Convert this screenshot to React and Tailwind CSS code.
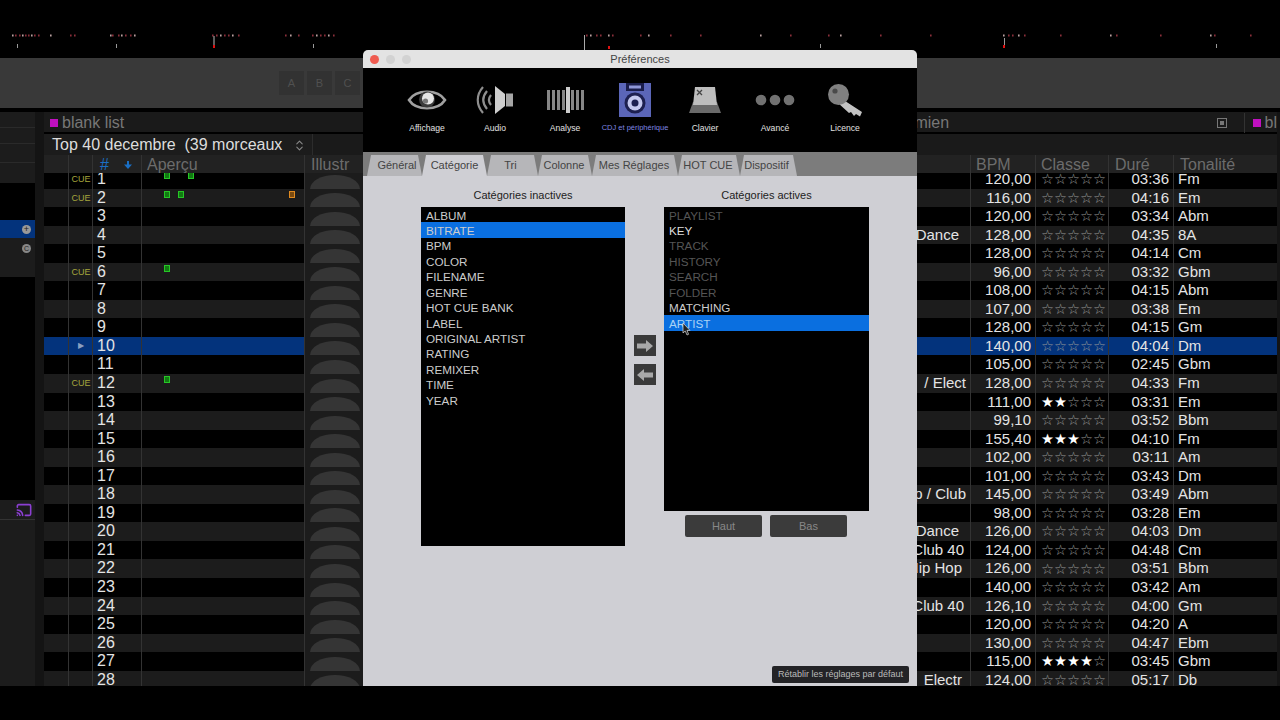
import { Cast, ChevronsUpDown } from "lucide-react";

const cols = "grid grid-cols-[24px_24px_49px_163px_59px_607px_65px_73px_65px_104px]";

// n, cue, genre + its padding, bpm, rating, time, key
const tracks = [
  [1, true, "", "", "120,00", 0, "03:36", "Fm"],
  [2, true, "", "", "116,00", 0, "04:16", "Em"],
  [3, false, "", "", "120,00", 0, "03:34", "Abm"],
  [4, false, "Dance", "pr-[11px]", "128,00", 0, "04:35", "8A"],
  [5, false, "", "", "128,00", 0, "04:14", "Cm"],
  [6, true, "", "", "96,00", 0, "03:32", "Gbm"],
  [7, false, "", "", "108,00", 0, "04:15", "Abm"],
  [8, false, "", "", "107,00", 0, "03:38", "Em"],
  [9, false, "", "", "128,00", 0, "04:15", "Gm"],
  [10, false, "", "", "140,00", 0, "04:04", "Dm"],
  [11, false, "", "", "105,00", 0, "02:45", "Gbm"],
  [12, true, "/ Elect", "pr-[4px]", "128,00", 0, "04:33", "Fm"],
  [13, false, "", "", "111,00", 2, "03:31", "Em"],
  [14, false, "", "", "99,10", 0, "03:52", "Bbm"],
  [15, false, "", "", "155,40", 3, "04:10", "Fm"],
  [16, false, "", "", "102,00", 0, "03:11", "Am"],
  [17, false, "", "", "101,00", 0, "03:43", "Dm"],
  [18, false, "p / Club", "pr-[4px]", "145,00", 0, "03:49", "Abm"],
  [19, false, "", "", "98,00", 0, "03:28", "Em"],
  [20, false, "Dance", "pr-[11px]", "126,00", 0, "04:03", "Dm"],
  [21, false, "Club 40", "pr-[6px]", "124,00", 0, "04:48", "Cm"],
  [22, false, "Hip Hop", "pr-[8px]", "126,00", 0, "03:51", "Bbm"],
  [23, false, "", "", "140,00", 0, "03:42", "Am"],
  [24, false, "Club 40", "pr-[6px]", "126,10", 0, "04:00", "Gm"],
  [25, false, "", "", "120,00", 0, "04:20", "A"],
  [26, false, "", "", "130,00", 0, "04:47", "Ebm"],
  [27, false, "", "", "115,00", 4, "03:45", "Gbm"],
  [28, false, "Electr", "pr-[8px]", "124,00", 0, "05:17", "Db"],
];

const marks = {
  1: ["left-[22px]", "left-[46px]"],
  2: ["left-[22px]", "left-[36px]"],
  6: ["left-[22px]"],
  12: ["left-[22px]"],
};

const inactive = ["ALBUM", "BITRATE", "BPM", "COLOR", "FILENAME", "GENRE", "HOT CUE BANK", "LABEL", "ORIGINAL ARTIST", "RATING", "REMIXER", "TIME", "YEAR"];

const active = [
  ["PLAYLIST", "text-[#555]"],
  ["KEY", "text-[#ddd]"],
  ["TRACK", "text-[#555]"],
  ["HISTORY", "text-[#555]"],
  ["SEARCH", "text-[#555]"],
  ["FOLDER", "text-[#555]"],
  ["MATCHING", "text-[#ccc]"],
  ["ARTIST", "text-[#a9d2f5]"],
];

const tabs = [
  ["Général", "w-[55px] pl-[5px]"],
  ["Catégorie", "w-[65px]"],
  ["Tri", "w-[51px] pr-[4px]"],
  ["Colonne", "w-[54px] pr-[2px]"],
  ["Mes Réglages", "w-[86px] pr-[2px]"],
  ["HOT CUE", "w-[62px] pr-[2px]"],
  ["Dispositif", "w-[57px] pr-[4px]"],
];

function Waveform() {
  const dots = [12, 15, 19, 22, 25, 28, 31, 34, 38, 50, 70, 74, 110, 112, 118, 121, 125, 130, 134, 212, 216, 220, 224, 228, 232, 238, 285, 290, 298, 312, 316, 320, 324, 328, 333, 586, 590, 596, 600, 608, 612, 640, 648, 670, 700, 760, 790, 828, 840, 880, 930, 1003, 1008, 1012, 1018, 1024, 1060, 1110, 1116, 1160, 1210, 1214, 1250];
  return (
    <svg width="1280" height="58" className="block">
      {dots.map((x, i) => (
        <rect key={x} x={x} y="34.5" width="1.6" height="2" fill={i % 3 === 0 ? "#b9a0a0" : "#8a2f3a"} />
      ))}
      {[17, 116, 313, 820, 1216].map((x) => (
        <rect key={x} x={x} y="44" width="1" height="4" fill="#999" />
      ))}
      <rect x="584" y="35" width="1" height="15" fill="#aaa" />
      <rect x="213.5" y="36" width="1" height="10" fill="#bbb" />
      <rect x="213" y="45" width="2" height="3" fill="#d11" />
      <rect x="608" y="46" width="2" height="3" fill="#d11" />
      <rect x="1004" y="38" width="1" height="8" fill="#999" />
      <rect x="1003" y="45" width="2" height="3" fill="#d11" />
    </svg>
  );
}

function Stars({ n }) {
  return (
    <span className="font-['DejaVu_Sans',sans-serif] text-[14.5px] leading-none whitespace-nowrap">
      <span className="text-white">{"★".repeat(n)}</span>
      <span className="text-[#999]">{"☆".repeat(5 - n)}</span>
    </span>
  );
}

function Row({ t }) {
  const [n, cue, genre, pad, bpm, rating, time, key] = t;
  const selected = n === 10;
  const bg = selected ? "bg-[#03337c]" : n % 2 === 0 ? "bg-[#1c1c1c]" : "bg-black";
  return (
    <div className={`${cols} ${bg} h-[18.55px] items-stretch text-[15px] leading-[18.55px] text-[#e4e4e4]`}>
      <div />
      <div className="flex items-center justify-center border-l border-[#333] pl-[1px] text-[9px] text-[#a5a53c]">
        {cue && "CUE"}
        {selected && <span className="text-[8px] text-[#8aa0c0]">▶</span>}
      </div>
      <div className="border-l border-[#333] pl-[4px] text-[16px]">{n}</div>
      <div className="relative border-l border-[#333]">
        {(marks[n] || []).map((left) => (
          <span key={left} className={`absolute top-[2px] h-[7px] w-[6px] border border-[#26c626] bg-[#127a12] ${left}`} />
        ))}
        {n === 2 && <span className="absolute left-[147px] top-[2px] h-[7px] w-[6px] border border-[#e08a20] bg-[#7a4a10]" />}
      </div>
      <div className="flex items-end justify-center border-l border-[#333] bg-[#1c1c1c] pl-[2px]">
        <div className="h-[14px] w-[50px] rounded-[50%_50%_0_0/100%_100%_0_0] bg-[#353535]" />
      </div>
      <div className={`overflow-hidden text-right whitespace-nowrap ${pad}`}>{genre}</div>
      <div className="border-l border-[#333] pr-[4px] text-right">{bpm}</div>
      <div className="flex items-center border-l border-[#333] pl-[5px]">
        <Stars n={rating} />
      </div>
      <div className="border-l border-[#333] pr-[4px] text-right">{time}</div>
      <div className="border-l border-[#333] pl-[4px]">{key}</div>
    </div>
  );
}

function EyeIcon() {
  return (
    <svg width="40" height="24" viewBox="0 0 40 24">
      <path d="M2 12 C9 1 31 1 38 12 C31 23 9 23 2 12 Z" fill="none" stroke="#a0a0a0" strokeWidth="2.6" />
      <circle cx="20" cy="11.5" r="8" fill="#3a3a3a" />
      <circle cx="21" cy="10.5" r="6" fill="#e6e6e6" />
      <circle cx="18.5" cy="13" r="2.6" fill="#777" />
    </svg>
  );
}

function SpeakerIcon() {
  return (
    <svg width="38" height="28" viewBox="0 0 38 28">
      <path d="M7 1 C0 9 0 19 7 27" fill="none" stroke="#8e8e8e" strokeWidth="2.2" />
      <path d="M11 5 C6 11 6 17 11 23" fill="none" stroke="#8e8e8e" strokeWidth="2.2" />
      <path d="M15 9 C12.5 12 12.5 16 15 19" fill="none" stroke="#8e8e8e" strokeWidth="2.2" />
      <path d="M19 0 L29 8 L29 20 L19 28 Z" fill="#cfcfcf" />
      <rect x="30" y="7.5" width="7" height="13" fill="#a6a6a6" />
    </svg>
  );
}

function BarsIcon() {
  const xs = [0, 5, 10, 15, 24, 29, 34];
  return (
    <svg width="37" height="26" viewBox="0 0 37 26">
      {xs.map((x) => (
        <rect key={x} x={x} y="3" width="3" height="20" fill="#868686" />
      ))}
      <rect x="19" y="0" width="4" height="26" fill="#cdcdcd" />
    </svg>
  );
}

function FloppyIcon() {
  return (
    <svg width="32" height="34" viewBox="0 0 32 34">
      <path d="M0 0 H32 V34 H0 Z" fill="#5b66b8" />
      <rect x="7" y="0" width="18" height="8" fill="#1a1d4a" />
      <rect x="10" y="2.5" width="12" height="3" fill="#8f97d8" />
      <circle cx="16" cy="20" r="10.5" fill="#1d2050" />
      <circle cx="16" cy="20" r="7.5" fill="#c4c8ee" />
      <circle cx="16" cy="20" r="3.5" fill="#1d2050" />
    </svg>
  );
}

function KeyCapIcon() {
  return (
    <svg width="32" height="26" viewBox="0 0 32 26">
      <path d="M0 26 L4 15 H28 L32 26 Z" fill="#6a6a6a" />
      <path d="M6 0 H26 L28 18 H4 Z" fill="#bdbdbd" />
      <path d="M8 3 L13 8 M13 3 L8 8" stroke="#444" strokeWidth="1.3" />
    </svg>
  );
}

function DotsIcon() {
  return (
    <svg width="40" height="12" viewBox="0 0 40 12">
      <circle cx="6" cy="6" r="5.3" fill="#717171" />
      <circle cx="20" cy="6" r="5.3" fill="#717171" />
      <circle cx="34" cy="6" r="5.3" fill="#717171" />
    </svg>
  );
}

function KeyIcon() {
  return (
    <svg width="35" height="33" viewBox="0 0 35 33">
      <path d="M14 15 L34 28 L32 32.5 L28 30 L26 32 L23 28 L21 29 L10 19 Z" fill="#c2c2c2" />
      <circle cx="10.5" cy="10.5" r="10.5" fill="#808080" />
      <circle cx="7" cy="7" r="2.6" fill="#4a4a4a" />
    </svg>
  );
}

const prefs = [
  [<EyeIcon />, "Affichage"],
  [<SpeakerIcon />, "Audio"],
  [<BarsIcon />, "Analyse"],
  [<FloppyIcon />, "CDJ et périphérique"],
  [<KeyCapIcon />, "Clavier"],
  [<DotsIcon />, "Avancé"],
  [<KeyIcon />, "Licence"],
];

function Preferences() {
  return (
    <div className="absolute left-[363px] top-[50px] flex h-[636px] w-[554px] flex-col overflow-hidden rounded-t-[5px]">
      <div className="relative flex h-[18px] items-center justify-center bg-[#e3e3e3] text-[11px] text-[#444]">
        <div className="absolute left-[7px] flex gap-[7px]">
          <span className="h-[9px] w-[9px] rounded-full bg-[#ef5b50]" />
          <span className="h-[9px] w-[9px] rounded-full bg-[#d2d2d2]" />
          <span className="h-[9px] w-[9px] rounded-full bg-[#d2d2d2]" />
        </div>
        Préférences
      </div>

      <div className="flex h-[84px] bg-black pl-[27px]">
        {prefs.map(([icon, label], i) => (
          <div key={label} className={`flex w-[70px] flex-col items-center ${i === 0 ? "pl-[4px]" : ""}`}>
            <div className="mt-[14px] flex h-[36px] items-center justify-center">{icon}</div>
            <div className={`mt-[4px] whitespace-nowrap ${i === 3 ? "text-[7.5px] leading-[12px] text-[#7f86e0]" : "text-[8.6px] leading-[12px] text-[#e2e2e2]"}`}>{label}</div>
          </div>
        ))}
      </div>

      <div className="flex h-[24px] items-end bg-[#7c7c7c] pl-[4px]">
        {tabs.map(([label, w], i) => (
          <div
            key={label}
            className={`flex h-[21px] items-center justify-center text-[11px] text-[#444] [clip-path:polygon(4px_0,calc(100%-4px)_0,100%_100%,0_100%)] ${w} ${i === 1 ? "bg-[#cfcfd4]" : "bg-[#b6b6b9]"}`}
          >
            {label}
          </div>
        ))}
      </div>

      <div className="flex flex-1 flex-col justify-between bg-[#cfcfd4]">
        <div className="flex pl-[58px]">
          <div className="w-[204px]">
            <div className="h-[31px] pt-[13px] text-center text-[11px] leading-[13px] text-[#222]">Catégories inactives</div>
            <div className="h-[339px] bg-black">
              {inactive.map((name) => (
                <div key={name} className={`h-[15.45px] pl-[5px] pt-[0.5px] text-[11.7px] leading-[15px] text-[#ccc] ${name === "BITRATE" ? "bg-[#0a6fe0]" : ""}`}>
                  {name}
                </div>
              ))}
            </div>
          </div>

          <div className="w-[39px] pl-[9px] pt-[159px]">
            <button className="flex h-[21px] w-[22px] items-center justify-center bg-[#3a3a3a]">
              <svg width="16" height="12" viewBox="0 0 16 12"><path d="M0 3.5 H9 V0 L16 6 L9 12 V8.5 H0 Z" fill="#a8a8a8" /></svg>
            </button>
            <button className="mt-[8px] flex h-[21px] w-[22px] items-center justify-center bg-[#3a3a3a]">
              <svg width="16" height="12" viewBox="0 0 16 12"><path d="M16 3.5 H7 V0 L0 6 L7 12 V8.5 H16 Z" fill="#a8a8a8" /></svg>
            </button>
          </div>

          <div className="w-[205px]">
            <div className="h-[31px] pt-[13px] text-center text-[11px] leading-[13px] text-[#222]">Catégories actives</div>
            <div className="relative h-[304px] bg-black">
              {active.map(([name, color]) => (
                <div key={name} className={`h-[15.45px] pl-[5px] pt-[0.5px] text-[11.7px] leading-[15px] ${color} ${name === "ARTIST" ? "bg-[#0a6fe0]" : ""}`}>
                  {name}
                </div>
              ))}
              <svg className="absolute left-[18px] top-[116px]" width="9" height="13" viewBox="0 0 9 13">
                <path d="M1 0 V10 L3.2 8 L5 12 L6.6 11.3 L5 7.4 H8 Z" fill="#222" stroke="#ddd" strokeWidth="0.7" />
              </svg>
            </div>
            <div className="mt-[4px] flex gap-[8px] pl-[21px]">
              <button className="h-[22px] w-[77px] rounded-[2px] bg-[#3b3b3b] text-[11px] text-[#888]">Haut</button>
              <button className="h-[22px] w-[77px] rounded-[2px] bg-[#3b3b3b] text-[11px] text-[#888]">Bas</button>
            </div>
          </div>
        </div>

        <button className="mb-[3px] mr-[8px] h-[17px] w-[137px] self-end whitespace-nowrap rounded-[2px] bg-[#232326] text-[9px] text-[#bbb]">
          Rétablir les réglages par défaut
        </button>
      </div>
    </div>
  );
}

function Sidebar() {
  return (
    <div className="flex w-[35px] flex-col bg-[#1c1c1c]">
      <div className="h-[16px] border-b border-[#2a2a2a]" />
      <div className="h-[16px] border-b border-[#2a2a2a]" />
      <div className="h-[19px] border-b border-[#2a2a2a]" />
      <div className="h-[20px]" />
      <div className="h-[37px] bg-black" />
      <div className="flex h-[18px] items-center justify-end bg-[#03337c] pr-[4px]">
        <span className="flex h-[9px] w-[9px] items-center justify-center rounded-full bg-[#999] text-[9px] leading-none text-[#222]">+</span>
      </div>
      <div className="flex h-[20px] items-center justify-end pr-[4px]">
        <span className="flex h-[9px] w-[9px] items-center justify-center rounded-full bg-[#888] text-[7px] leading-none text-[#222]">C</span>
      </div>
      <div className="h-[19px]" />
      <div className="h-[223px] bg-black" />
      <div className="flex h-[20px] items-center justify-end border-b border-[#333] pr-[3px]">
        <Cast size={16} color="#8b3fd1" strokeWidth={2.4} />
      </div>
      <div className="flex-1" />
    </div>
  );
}

export default function App() {
  return (
    <div className="relative h-[720px] w-[1280px] overflow-hidden bg-black font-['Liberation_Sans',Arial,sans-serif]">
      <Waveform />

      <div className="flex h-[50px] items-center gap-[3px] bg-[#393939] pl-[279px]">
        {["A", "B", "C"].map((l) => (
          <div key={l} className="flex h-[24px] w-[25px] items-center justify-center bg-[#323232] text-[11px] text-[#505050]">{l}</div>
        ))}
      </div>

      <div className="mt-[4px] flex h-[574px]">
        <Sidebar />
        <div className="w-[9px] bg-[#141414]" />

        <div className="flex w-[1233px] flex-col">
          <div className="flex h-[20px] items-center bg-[#1a1a1a] pt-[1px] text-[16px] text-[#777]">
            <div className="flex w-[873px] items-center pl-[6px]">
              <span className="mr-[4px] h-[8px] w-[8px] bg-[#c010c0]" />
              blank list
            </div>
            <div className="w-[303px]">mien</div>
            <span className="flex h-[10px] w-[10px] items-center justify-center border border-[#777]">
              <span className="h-[4px] w-[4px] bg-[#777]" />
            </span>
            <span className="ml-[17px] h-[20px] border-l border-[#333]" />
            <span className="ml-[8px] mr-[4px] h-[8px] w-[8px] shrink-0 bg-[#c010c0]" />
            bl
          </div>

          <div className="mt-[2px] flex h-[21px] items-center bg-[#1a1a1a]">
            <div className="flex h-full w-[269px] items-center justify-between border-r border-[#2c2c2c] bg-[#1c1c1c] pl-[8px] pr-[6px] pt-[1px] text-[16px] text-[#ddd]">
              <span className="whitespace-pre">Top 40 decembre  (39 morceaux</span>
              <ChevronsUpDown size={13} color="#888" />
            </div>
          </div>

          <div className={`${cols} h-[18px] shrink-0 bg-[#222] text-[16px] leading-[20px] text-[#6c6c6c]`}>
            <div />
            <div className="border-l border-[#333]" />
            <div className="flex items-center justify-between border-l border-[#333] pl-[7px] pr-[9px]">
              <span className="text-[#1a6fc4]">#</span>
              <svg width="8" height="8" viewBox="0 0 8 8"><path d="M3 0 H5 V3.5 H8 L4 8 L0 3.5 H3 Z" fill="#1a6fc4" /></svg>
            </div>
            <div className="border-l border-[#333] pl-[5px]">Aperçu</div>
            <div className="border-l border-[#333] pl-[6px]">Illustr</div>
            <div />
            <div className="border-l border-[#333] pl-[5px]">BPM</div>
            <div className="border-l border-[#333] pl-[5px]">Classe</div>
            <div className="border-l border-[#333] pl-[6px]">Duré</div>
            <div className="border-l border-[#333] pl-[6px]">Tonalité</div>
          </div>

          <div className="flex-1 overflow-hidden">
            <div className="-mt-[3px]">
              {tracks.map((t) => (
                <Row key={t[0]} t={t} />
              ))}
            </div>
          </div>
        </div>

        <div className="flex-1 bg-[#141414]" />
      </div>

      <Preferences />
    </div>
  );
}
